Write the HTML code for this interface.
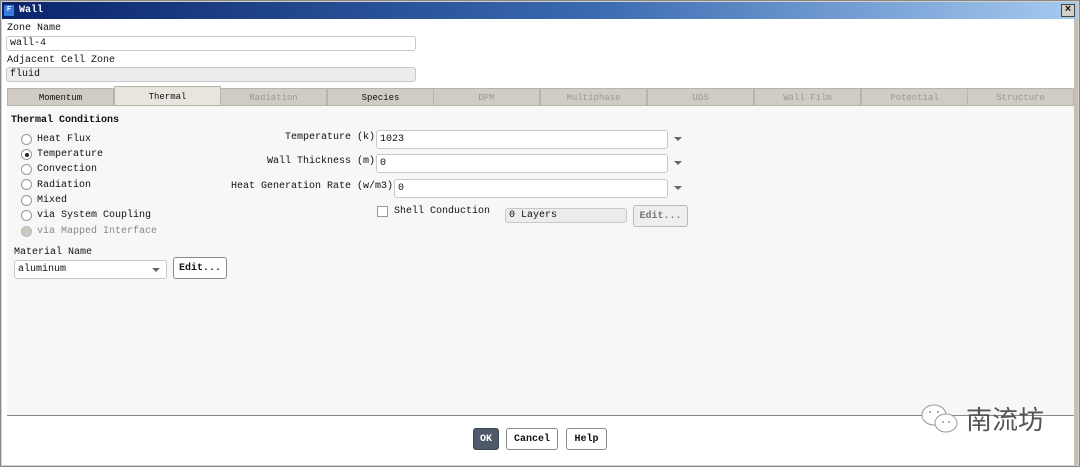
<!DOCTYPE html>
<html><head><meta charset="utf-8"><style>
*{box-sizing:border-box;margin:0;padding:0}
body{width:1080px;height:467px;background:#d4d0c8;font-family:"Liberation Mono",monospace;font-size:10px;line-height:12px;color:#111;position:relative;overflow:hidden}
.a{position:absolute}
.win{left:0;top:0;width:1080px;height:467px;border:1px solid #888;background:#d4d0c8}
.title{left:2px;top:2px;width:1076px;height:17px;background:linear-gradient(90deg,#0a246a,#3a6ab0 55%,#a6caf0)}
.body{left:2px;top:19px;width:1072px;height:446px;background:#fff}
.inp{border:1px solid #c8c8c8;border-radius:3px;background:#fff;height:15px;padding-left:3px;line-height:14px;font-size:10px}
.tab{top:88px;height:18px;background:#d0ccc4;border:1px solid #b8b4ac;text-align:center;line-height:18px;font-size:9px;color:#999}
.tab.b{color:#111}
.rad{width:11px;height:11px;border:1px solid #999;border-radius:50%;background:#fff}
.btn{border:1px solid #8a8a8a;border-radius:3px;background:#fff;text-align:center;font-weight:bold;font-size:10px}
.arr{width:0;height:0;border-left:4px solid transparent;border-right:4px solid transparent;border-top:4px solid #666}
</style></head><body>
<div class="a win"></div>
<div class="a title"></div>
<div class="a" style="left:4px;top:5px;width:10px;height:11px;background:#3a7be0;color:#fff;font-size:7px;font-weight:bold;text-align:center;line-height:11px">F</div>
<div class="a" style="left:19px;top:5px;color:#fff;font-weight:bold;font-size:10px">Wall</div>
<div class="a" style="left:1061px;top:4px;width:14px;height:13px;background:#d4d0c8;border:1px solid #444;text-align:center;font-size:11px;line-height:11px;font-weight:bold">×</div>
<div class="a body"></div>
<div class="a" style="left:1074px;top:19px;width:4px;height:446px;background:#c4c0b8"></div>
<div class="a" style="left:7px;top:23px">Zone Name</div>
<div class="a inp" style="left:6px;top:36px;width:410px">wall-4</div>
<div class="a" style="left:7px;top:55px">Adjacent Cell Zone</div>
<div class="a inp" style="left:6px;top:67px;width:410px;background:#ececec">fluid</div>
<div class="a" style="left:7px;top:106px;width:1067px;height:310px;background:#f7f7f7"></div>
<div class="a tab b" style="left:7px;width:107px">Momentum</div>
<div class="a tab b" style="left:114px;width:107px;top:86px;height:20px;background:#e8e5de;line-height:20px">Thermal</div>
<div class="a tab" style="left:220px;width:107px">Radiation</div>
<div class="a tab b" style="left:327px;width:107px">Species</div>
<div class="a tab" style="left:433px;width:107px">DPM</div>
<div class="a tab" style="left:540px;width:107px">Multiphase</div>
<div class="a tab" style="left:647px;width:107px">UDS</div>
<div class="a tab" style="left:754px;width:107px">Wall Film</div>
<div class="a tab" style="left:861px;width:107px">Potential</div>
<div class="a tab" style="left:967px;width:107px">Structure</div>
<div class="a" style="left:11px;top:115px;font-weight:bold">Thermal Conditions</div>
<div class="a rad" style="left:21px;top:134px"></div><div class="a" style="left:37px;top:134px">Heat Flux</div>
<div class="a rad" style="left:21px;top:149px"></div><div class="a" style="left:25px;top:153px;width:4px;height:4px;border-radius:50%;background:#222"></div><div class="a" style="left:37px;top:149px">Temperature</div>
<div class="a rad" style="left:21px;top:164px"></div><div class="a" style="left:37px;top:164px">Convection</div>
<div class="a rad" style="left:21px;top:179px"></div><div class="a" style="left:37px;top:180px">Radiation</div>
<div class="a rad" style="left:21px;top:195px"></div><div class="a" style="left:37px;top:195px">Mixed</div>
<div class="a rad" style="left:21px;top:210px"></div><div class="a" style="left:37px;top:210px">via System Coupling</div>
<div class="a rad" style="left:21px;top:226px;background:#ccc8c0;border-color:#bbb"></div><div class="a" style="left:37px;top:226px;color:#888">via Mapped Interface</div>
<div class="a" style="left:14px;top:247px">Material Name</div>
<div class="a inp" style="left:14px;top:260px;width:153px;height:19px;line-height:18px">aluminum</div>
<div class="a arr" style="left:152px;top:268px"></div>
<div class="a btn" style="left:173px;top:257px;width:54px;height:22px;line-height:21px">Edit...</div>
<div class="a" style="left:285px;top:132px">Temperature (k)</div>
<div class="a inp" style="left:376px;top:130px;width:292px;height:19px;line-height:18px">1023</div>
<div class="a arr" style="left:674px;top:137px"></div>
<div class="a" style="left:267px;top:156px">Wall Thickness (m)</div>
<div class="a inp" style="left:376px;top:154px;width:292px;height:19px;line-height:18px">0</div>
<div class="a arr" style="left:674px;top:161px"></div>
<div class="a" style="left:231px;top:181px">Heat Generation Rate (w/m3)</div>
<div class="a inp" style="left:394px;top:179px;width:274px;height:19px;line-height:18px">0</div>
<div class="a arr" style="left:674px;top:186px"></div>
<div class="a" style="left:377px;top:206px;width:11px;height:11px;border:1px solid #999;background:#fff"></div>
<div class="a" style="left:394px;top:206px">Shell Conduction</div>
<div class="a inp" style="left:505px;top:208px;width:122px;background:#ececec">0 Layers</div>
<div class="a btn" style="left:633px;top:205px;width:55px;height:22px;line-height:21px;background:#eee;color:#777;border-color:#bbb">Edit...</div>
<div class="a" style="left:7px;top:415px;width:1067px;height:1px;background:#888"></div>
<div class="a btn" style="left:473px;top:428px;width:26px;height:22px;line-height:21px;background:#4e5a6a;color:#fff;border-color:#3a4450">OK</div>
<div class="a btn" style="left:506px;top:428px;width:52px;height:22px;line-height:21px">Cancel</div>
<div class="a btn" style="left:566px;top:428px;width:41px;height:22px;line-height:21px">Help</div>
<svg class="a" style="left:918px;top:402px" width="48" height="36"><ellipse cx="16" cy="13" rx="12" ry="10" fill="#fff" stroke="#999" stroke-width="1"/><ellipse cx="28" cy="21" rx="11" ry="9" fill="#fff" stroke="#999" stroke-width="1"/><circle cx="12" cy="10" r="1" fill="#999"/><circle cx="20" cy="10" r="1" fill="#999"/><circle cx="25" cy="20" r="1" fill="#999"/><circle cx="31" cy="20" r="1" fill="#999"/></svg>
<div class="a" style="left:966px;top:403px;font-family:'Noto Sans CJK SC',sans-serif;font-size:26px;color:#555;line-height:32px">南流坊</div>
</body></html>
